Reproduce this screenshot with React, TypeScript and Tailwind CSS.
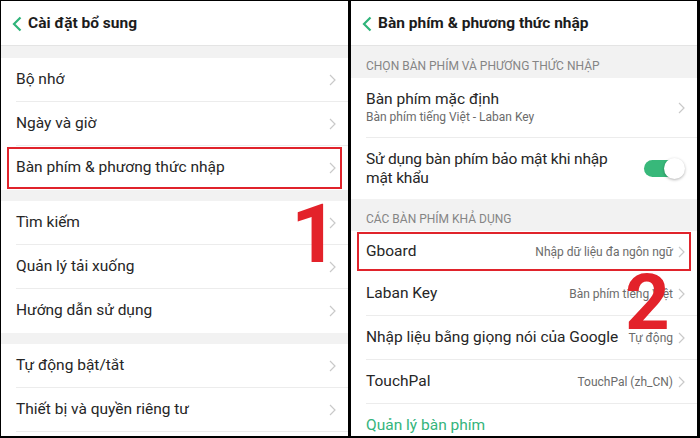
import React from "react";

const Chevron = () => (
  <svg width="7" height="12" viewBox="0 0 7 12" className="shrink-0">
    <polyline points="1,1 6,6 1,11" fill="none" stroke="#c9c9c9" strokeWidth="1.2" />
  </svg>
);

const BackArrow = () => (
  <svg width="10" height="16" viewBox="0 0 10 16" className="shrink-0">
    <polyline points="8.5,1.5 2,8 8.5,14.5" fill="none" stroke="#2fb47a" strokeWidth="2.2" />
  </svg>
);

const Header = ({ title }: { title: string }) => (
  <div className="flex h-[45px] shrink-0 items-center gap-[6px] border-b border-[#e4e4e4] pl-[11px] pt-[1px]">
    <BackArrow />
    <span className="text-[15.5px] font-bold text-[#1c1c1c]">{title}</span>
  </div>
);

const Row = ({
  label,
  value,
  boxed,
  last,
  h = "h-[44px]",
}: {
  label: string;
  value?: string;
  boxed?: boolean;
  last?: boolean;
  h?: string;
}) => (
  <div className={`relative flex ${h} shrink-0 pl-[15px]`}>
    <div
      className={`flex flex-1 items-center justify-between pr-[12px] ${
        last ? "" : "border-b border-[#ececec]"
      }`}
    >
      <span className="whitespace-nowrap text-[15.5px] text-[#262626]">{label}</span>
      <div className="flex items-center gap-[5px]">
        {value && <span className="whitespace-nowrap text-[12px] text-[#6b6b6b]">{value}</span>}
        <Chevron />
      </div>
    </div>
    {boxed && (
      <div className="absolute inset-y-[1px] left-[6px] right-[6px] border-2 border-[#e0232b]" />
    )}
  </div>
);

const Gap = ({ h }: { h: string }) => <div className={`${h} shrink-0 bg-[#f2f2f2]`} />;

const SectionTitle = ({ text, h = "h-[31px]" }: { text: string; h?: string }) => (
  <div
    className={`flex ${h} shrink-0 items-end bg-[#f2f2f2] pb-[3px] pl-[15px] text-[12px] uppercase text-[#858585]`}
  >
    {text}
  </div>
);

const Toggle = () => (
  <div className="relative h-[17px] w-[34px] rounded-full bg-[#38b87a]">
    <div className="absolute right-[-7px] top-[-2px] h-[21px] w-[21px] rounded-full bg-white shadow-[0_1px_3px_rgba(0,0,0,0.3)]" />
  </div>
);

const LeftPanel = () => (
  <div className="relative flex w-[347px] shrink-0 flex-col overflow-hidden bg-white">
    <Header title="Cài đặt bổ sung" />
    <Gap h="h-[12px]" />
    <Row label="Bộ nhớ" />
    <Row label="Ngày và giờ" />
    <Row label="Bàn phím & phương thức nhập" boxed last />
    <Gap h="h-[11px]" />
    <Row label="Tìm kiếm" />
    <Row label="Quản lý tải xuống" />
    <Row label="Hướng dẫn sử dụng" last />
    <Gap h="h-[11px]" />
    <Row label="Tự động bật/tắt" />
    <Row label="Thiết bị và quyền riêng tư" />
    <span className="absolute left-[290px] top-[192px] text-[82px] font-bold leading-none text-[#e3222a]">
      1
    </span>
  </div>
);

const RightPanel = () => (
  <div className="relative flex w-[346px] shrink-0 flex-col overflow-hidden bg-white">
    <Header title="Bàn phím & phương thức nhập" />
    <SectionTitle text="Chọn bàn phím và phương thức nhập" h="h-[32px]" />
    <div className="flex h-[60px] shrink-0 pl-[15px]">
      <div className="flex flex-1 items-center justify-between border-b border-[#ececec] pr-[12px]">
        <div className="flex flex-col">
          <span className="text-[15.5px] leading-[20px] text-[#262626]">Bàn phím mặc định</span>
          <span className="text-[12px] leading-[17px] text-[#6b6b6b]">
            Bàn phím tiếng Việt - Laban Key
          </span>
        </div>
        <Chevron />
      </div>
    </div>
    <div className="flex h-[61px] shrink-0 items-center justify-between pl-[15px] pr-[19px]">
      <span className="whitespace-nowrap text-[15.5px] leading-[19px] tracking-[-0.2px] text-[#262626]">
        Sử dụng bàn phím bảo mật khi nhập
        <br />
        mật khẩu
      </span>
      <Toggle />
    </div>
    <SectionTitle text="Các bàn phím khả dụng" h="h-[32px]" />
    <Row label="Gboard" value="Nhập dữ liệu đa ngôn ngữ" boxed last h="h-[41px]" />
    <Row label="Laban Key" value="Bàn phím tiếng Việt" />
    <Row label="Nhập liệu bằng giọng nói của Google" value="Tự động" />
    <Row label="TouchPal" value="TouchPal (zh_CN)" />
    <div className="flex h-[44px] shrink-0 items-center pl-[15px] text-[15.5px] text-[#34b47c]">
      Quản lý bàn phím
    </div>
    <span className="absolute left-[274px] top-[263px] text-[78px] font-bold leading-none text-[#e3222a]">
      2
    </span>
  </div>
);

export default function App() {
  return (
    <div
      className="flex h-[438px] w-[700px] gap-[3px] overflow-hidden bg-black pb-[2px] pl-px pr-[3px] pt-px"
      style={{ fontFamily: "Roboto, 'Noto Sans', sans-serif" }}
    >
      <LeftPanel />
      <RightPanel />
    </div>
  );
}
